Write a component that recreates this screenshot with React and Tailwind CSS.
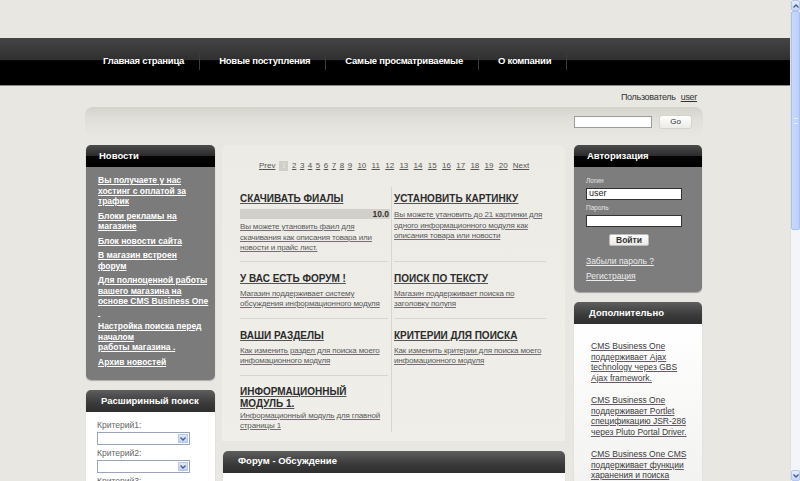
import React from "react";

const navItems = ["Главная страница", "Новые поступления", "Самые просматриваемые", "О компании"];

const newsLinks = [
  ["Вы получаете у нас", "хостинг с оплатой за", "трафик"],
  ["Блоки рекламы на", "магазине"],
  ["Блок новости сайта"],
  ["В магазин встроен", "форум"],
  ["Для полноценной работы", "вашего магазина на", "основе CMS Business One", ""],
  ["Настройка поиска перед", "началом", "работы магазина ."],
  ["Архив новостей"],
];

const extraLinks = [
  ["CMS Business One", "поддерживает Ajax", "technology через GBS", "Ajax framework."],
  ["CMS Business One", "поддерживает Portlet", "спецификацию JSR-286", "через Pluto Portal Driver."],
  ["CMS Business One CMS", "поддерживает функции", "харанения и поиска", "информационных данных"],
];

const pages = ["2","3","4","5","6","7","8","9","10","11","12","13","14","15","16","17","18","19","20"];

function Lines({ lines }) {
  return lines.map((l, i) => (
    <React.Fragment key={i}>
      {l === "" ? "\u00a0" : l}
      {i < lines.length - 1 && <br />}
    </React.Fragment>
  ));
}

function BlackHeader({ children }) {
  return (
    <div className="h-[22px] rounded-t-[5px] bg-[linear-gradient(to_bottom,#4c4c4c,#2c2c2c_48%,#050505_52%,#000)] flex items-center pl-[13px] text-[9.5px] font-bold text-white">
      {children}
    </div>
  );
}

function GrayHeader({ children, className = "" }) {
  return (
    <div className={"h-[22px] rounded-t-[5px] bg-[linear-gradient(to_bottom,#5e5e5e,#3a3a3a_60%,#2e2e2e)] flex items-center text-[9.5px] font-bold text-white " + className}>
      {children}
    </div>
  );
}

function Cell({ left, last, children }) {
  return (
    <div className={left ? "border-r border-[#d6d5cf] pr-[3px]" : "pl-[2px]"}>
      <div className={"h-full " + (last ? "" : "border-b border-[#d6d5cf]")}>{children}</div>
    </div>
  );
}

function Heading({ children }) {
  return (
    <div className="text-[10px] leading-[12px] font-bold text-[#2b2b2b] underline decoration-[#555] underline-offset-[1px] whitespace-nowrap">
      {children}
    </div>
  );
}

function Desc({ lines, className = "" }) {
  return (
    <div className={"text-[8px] leading-[10.5px] tracking-[-0.15px] text-[#5a5a5a] underline decoration-[#7a6a7a] whitespace-nowrap " + className}>
      <Lines lines={lines} />
    </div>
  );
}

function SelectBox() {
  return (
    <div className="w-[93px] h-[13px] bg-white border border-[#9aa6b8] flex justify-end items-stretch p-[1px]">
      <div className="w-[10px] bg-[linear-gradient(to_bottom,#dfe8fb,#bfd0f3)] border border-[#b7c8ec] flex items-center justify-center">
        <svg width="6" height="4" viewBox="0 0 6 4"><path d="M0.5 0.5 L3 3 L5.5 0.5" fill="none" stroke="#4a5c85" strokeWidth="1.3" /></svg>
      </div>
    </div>
  );
}

export default function App() {
  return (
    <div className="w-[800px] h-[481px] overflow-hidden flex bg-[#e8e7e1] font-['Liberation_Sans',Arial,sans-serif]">
      <div className="w-[790px] flex flex-col shrink-0">
        <div className="h-[38px] shrink-0" />
        {/* nav */}
        <div className="h-[48px] shrink-0 bg-[linear-gradient(to_bottom,#454545,#2f2f2f_47%,#000_48%,#000)] border-b border-[#8a8a88] flex items-center pl-[84px]">
          {navItems.map((t) => (
            <div key={t} className="flex items-center h-[16px]">
              <span className="pl-[19px] pr-[15px] text-[9.5px] font-bold text-white tracking-[-0.25px] whitespace-nowrap">
                {t}
              </span>
              <span className="w-[1px] h-[16px] bg-[#3c3c3c]" />
            </div>
          ))}
        </div>
        {/* user row */}
        <div className="h-[21px] shrink-0 flex items-center justify-end pr-[93px] pt-[2px] text-[9px] tracking-[-0.3px] text-[#333]">
          <span>Пользователь</span>
          <span className="ml-[5px] underline">user</span>
        </div>
        {/* search strip */}
        <div className="ml-[85px] w-[618px] h-[30px] shrink-0 rounded-[8px] bg-[linear-gradient(to_bottom,#d3d2cb,#e0dfd9_40%,#e8e7e1)] flex items-center justify-end pr-[11px] gap-[7px]">
          <div className="w-[78px] h-[12px] bg-white border border-[#9c9c9c]" />
          <div className="w-[33px] h-[14px] rounded-[3px] bg-[linear-gradient(to_bottom,#ffffff,#ecebe6)] border border-[#d4d3cd] flex items-center justify-center text-[8px] text-[#333]">
            Go
          </div>
        </div>
        {/* main */}
        <div className="flex mt-[8px] ml-[86px] items-start">
          {/* left column */}
          <div className="w-[129px] shrink-0 flex flex-col">
            <div className="rounded-[5px] shadow-[0_1px_1px_rgba(0,0,0,0.25)]">
              <BlackHeader>Новости</BlackHeader>
              <div className="bg-[#7b7b7b] rounded-b-[5px] pl-[12px] pt-[8px] pb-[13px] flex flex-col gap-[4px]">
                {newsLinks.map((l, i) => (
                  <div key={i} className="text-[8.5px] leading-[10.5px] font-bold text-white underline whitespace-nowrap">
                    <Lines lines={l} />
                  </div>
                ))}
              </div>
            </div>
            <div className="mt-[10px] rounded-t-[5px] shadow-[0_1px_1px_rgba(0,0,0,0.2)]">
              <GrayHeader className="pl-[15px]">Расширинный поиск</GrayHeader>
              <div className="bg-white pl-[11px] pt-[8px] pb-[20px] text-[8.5px] text-[#666]">
                <div className="leading-[10px]">Критерий1:</div>
                <div className="mt-[2px]"><SelectBox /></div>
                <div className="leading-[10px] mt-[3px]">Критерий2:</div>
                <div className="mt-[2px]"><SelectBox /></div>
                <div className="leading-[10px] mt-[3px]">Критерий3:</div>
                <div className="mt-[2px]"><SelectBox /></div>
              </div>
            </div>
          </div>
          {/* center column */}
          <div className="w-[343px] ml-[7px] shrink-0 flex flex-col">
            <div className="rounded-t-[6px] bg-[linear-gradient(to_bottom,#ecebe6,#efeee9)] pt-[16px] pl-[18px] pr-[17px] pb-[9px]">
              <div className="flex items-center h-[10px] pl-[19px] text-[8px] text-[#555] whitespace-nowrap">
                <span className="underline">Prev</span>
                <span className="ml-[4px] w-[9px] h-[10px] bg-[#cfcec8] text-[#e4e3de] text-center leading-[10px]">1</span>
                {pages.map((p) => (
                  <span key={p} className={"underline " + (p.length > 1 ? "ml-[5.3px]" : "ml-[3.5px]")}>{p}</span>
                ))}
                <span className="ml-[5px] underline">Next</span>
              </div>
              <div className="mt-[16px] grid grid-cols-[152px_154px]">
                <Cell left>
                  <div className="pt-[6px] pb-[7px]">
                    <Heading>СКАЧИВАТЬ ФИАЛЫ</Heading>
                    <div className="mt-[4px] h-[10px] w-[150px] bg-[#d1d0ca] flex items-center justify-end pr-[1px] text-[8.5px] font-bold text-[#333]">10.0</div>
                    <Desc className="mt-[3px]" lines={["Вы можете утановить фаил для", "скачивания как описания товара или", "новости и прайс лист."]} />
                  </div>
                </Cell>
                <Cell>
                  <div className="pt-[6px]">
                    <Heading>УСТАНОВИТЬ КАРТИНКУ</Heading>
                    <Desc className="mt-[5px]" lines={["Вы можете утановить до 21 картинки для", "одного информационного модуля как", "описания товара или новости"]} />
                  </div>
                </Cell>
                <Cell left>
                  <div className="pt-[11px] pb-[8px]">
                    <Heading>У ВАС ЕСТЬ ФОРУМ !</Heading>
                    <Desc className="mt-[4px]" lines={["Магазин поддерживает систему", "обсуждения информационного модуля"]} />
                  </div>
                </Cell>
                <Cell>
                  <div className="pt-[11px] pb-[8px]">
                    <Heading>ПОИСК ПО ТЕКСТУ</Heading>
                    <Desc className="mt-[4px]" lines={["Магазин поддерживает поиска по", "заголовку полупя"]} />
                  </div>
                </Cell>
                <Cell left>
                  <div className="pt-[11px] pb-[8px]">
                    <Heading>ВАШИ РАЗДЕЛЫ</Heading>
                    <Desc className="mt-[4px]" lines={["Как изменить раздел для поиска моего", "инфомационного модуля"]} />
                  </div>
                </Cell>
                <Cell last>
                  <div className="pt-[11px] pb-[8px]">
                    <Heading>КРИТЕРИИ ДЛЯ ПОИСКА</Heading>
                    <Desc className="mt-[4px]" lines={["Как изменить критерии для поиска моего", "инфомационного модуля"]} />
                  </div>
                </Cell>
                <Cell left last>
                  <div className="pt-[10px]">
                    <Heading>ИНФОРМАЦИОННЫЙ<br />МОДУЛЬ 1.</Heading>
                    <Desc className="mt-[1px]" lines={["Информационный модуль для главной", "страницы 1"]} />
                  </div>
                </Cell>
                <Cell last><div /></Cell>
              </div>
            </div>
            <div className="mt-[10px] ml-[1px] rounded-t-[5px] shadow-[0_1px_1px_rgba(0,0,0,0.2)]">
              <GrayHeader className="pl-[15px]">Форум - Обсуждение</GrayHeader>
              <div className="bg-white h-[40px]" />
            </div>
          </div>
          {/* right column */}
          <div className="w-[128px] ml-[9px] shrink-0 flex flex-col">
            <div className="rounded-[5px] shadow-[0_1px_1px_rgba(0,0,0,0.3)]">
              <BlackHeader>Авторизация</BlackHeader>
              <div className="bg-[#7d7d7d] rounded-b-[5px] pl-[12px] pt-[10px] pb-[10.5px] flex flex-col items-start">
                <div className="text-[6.5px] leading-[8px] text-[#e6e6e6]">Логин</div>
                <div className="mt-[3px] w-[96px] h-[12px] bg-white border border-[#333] flex items-center pl-[2px] text-[9px] text-[#222]">user</div>
                <div className="mt-[4px] text-[6.5px] leading-[8px] text-[#e6e6e6]">Пароль</div>
                <div className="mt-[3px] w-[96px] h-[12px] bg-white border border-[#333]" />
                <div className="mt-[7px] ml-[23px] w-[40px] h-[12px] rounded-[2px] bg-[linear-gradient(to_bottom,#fff,#e8e8e4)] border border-[#bdbdbd] flex items-center justify-center text-[8.5px] font-bold text-[#333]">Войти</div>
                <div className="mt-[9.5px] text-[8.5px] leading-[11px] text-[#ececec] underline">Забыли пароль ?</div>
                <div className="mt-[4px] text-[8.5px] leading-[11px] text-[#ececec] underline">Регистрация</div>
              </div>
            </div>
            <div className="mt-[10px] rounded-t-[5px] shadow-[0_1px_1px_rgba(0,0,0,0.2)]">
              <GrayHeader className="pl-[15px]">Дополнительно</GrayHeader>
              <div className="bg-[linear-gradient(to_bottom,#ffffff,#f0f0ee)] pl-[17px] pt-[17px] pb-[20px] flex flex-col gap-[12px]">
                {extraLinks.map((l, i) => (
                  <div key={i} className="text-[8.5px] leading-[10.5px] text-[#3a3a3a] underline decoration-[#6a5a6a] whitespace-nowrap">
                    <Lines lines={l} />
                  </div>
                ))}
              </div>
            </div>
          </div>
        </div>
      </div>
      {/* scrollbar */}
      <div className="w-[10px] shrink-0 flex flex-col bg-[#f4f5f8] border-l border-[#e2e2dc]">
        <div className="h-[11px] bg-[linear-gradient(to_bottom,#e4ecfd,#c8d7f8)] border border-[#b4c6ee] rounded-[2px] flex items-center justify-center">
          <svg width="6" height="4" viewBox="0 0 6 4"><path d="M0.5 3.5 L3 1 L5.5 3.5" fill="none" stroke="#4a5c85" strokeWidth="1.3" /></svg>
        </div>
        <div className="h-[219px] bg-[linear-gradient(to_right,#c9d8fb,#bcd0fa)] border border-[#a9c0f0] rounded-[2px] flex items-center justify-center">
          <div className="w-[4px] h-[6px] border-y border-[#e6eefe]" />
        </div>
        <div className="flex-1" />
        <div className="h-[11px] bg-[linear-gradient(to_bottom,#e4ecfd,#c8d7f8)] border border-[#b4c6ee] rounded-[2px] flex items-center justify-center">
          <svg width="6" height="4" viewBox="0 0 6 4"><path d="M0.5 0.5 L3 3 L5.5 0.5" fill="none" stroke="#4a5c85" strokeWidth="1.3" /></svg>
        </div>
      </div>
    </div>
  );
}
